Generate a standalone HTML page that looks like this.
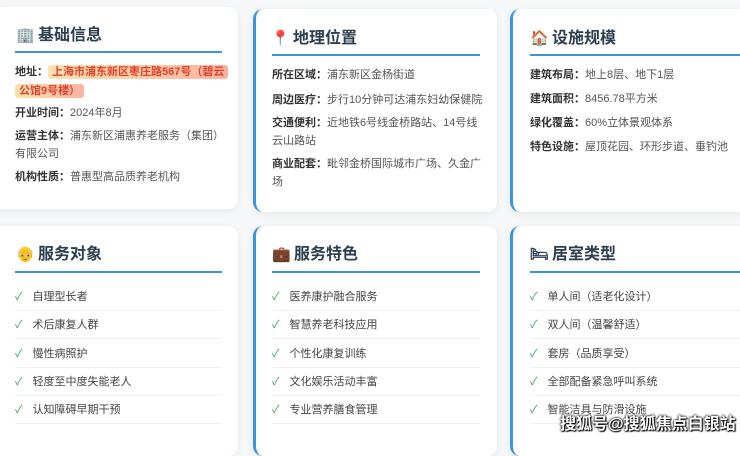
<!DOCTYPE html>
<html><head><meta charset="utf-8"><style>
*{margin:0;padding:0;box-sizing:border-box}
body{width:740px;height:440px;overflow:hidden;background:#f6f7f8;font-family:"Liberation Sans","Noto Sans CJK SC",sans-serif;position:relative}
.card{position:absolute;background:#fff;border-radius:10px;box-shadow:0 2px 8px rgba(0,0,0,.06)}
.bl{border-left:3px solid #3b94dc}
.t{position:absolute;font-size:16px;font-weight:bold;color:#2c3e50;height:22px;line-height:22px;white-space:nowrap}
.t i{font-style:normal;display:inline-block;width:18px;margin-right:4px;font-size:15px}
.ul{position:absolute;height:2px;background:#3b94dc}
.f{position:absolute;font-size:11px;color:#555;line-height:18px}
.f b{color:#333}
.li{position:absolute;font-size:11px;color:#444;height:28px;line-height:28px;border-bottom:1px solid #f0f0f0}
.li span{color:#2eaa5c;margin-right:10px}
.hl{background:linear-gradient(90deg,#fde3b0,#fbb3a3);color:#e0412a;font-weight:bold;padding:1px 4px;border-radius:3px;-webkit-box-decoration-break:clone;box-decoration-break:clone}
</style></head><body>
<div class="card" style="left:-10px;top:7px;width:248px;height:202px"></div>
<div class="t" style="left:16px;top:25px"><i>🏢</i>基础信息</div>
<div class="ul" style="left:15px;top:51px;width:207px"></div>
<div class="f" style="left:15px;top:63px;width:212px;line-height:19px"><b>地址：</b><span class="hl">上海市浦东新区枣庄路567号（碧云公馆9号楼）</span></div>
<div class="f" style="left:15px;top:104px"><b>开业时间：</b>2024年8月</div>
<div class="f" style="left:15px;top:127px;width:210px"><b>运营主体：</b>浦东新区浦惠养老服务（集团）有限公司</div>
<div class="f" style="left:15px;top:168px"><b>机构性质：</b>普惠型高品质养老机构</div>

<div class="card bl" style="left:253px;top:9px;width:244px;height:203px"></div>
<div class="t" style="left:271px;top:28px"><i>📍</i>地理位置</div>
<div class="ul" style="left:272px;top:54px;width:208px"></div>
<div class="f" style="left:272px;top:66px"><b>所在区域：</b>浦东新区金杨街道</div>
<div class="f" style="left:272px;top:91px"><b>周边医疗：</b>步行10分钟可达浦东妇幼保健院</div>
<div class="f" style="left:272px;top:114px;width:210px"><b>交通便利：</b>近地铁6号线金桥路站、14号线云山路站</div>
<div class="f" style="left:272px;top:155px;width:210px"><b>商业配套：</b>毗邻金桥国际城市广场、久金广场</div>

<div class="card bl" style="left:510px;top:9px;width:240px;height:203px"></div>
<div class="t" style="left:530px;top:28px"><i>🏠</i>设施规模</div>
<div class="ul" style="left:530px;top:54px;width:210px"></div>
<div class="f" style="left:530px;top:66px"><b>建筑布局：</b>地上8层、地下1层</div>
<div class="f" style="left:530px;top:90px"><b>建筑面积：</b>8456.78平方米</div>
<div class="f" style="left:530px;top:114px"><b>绿化覆盖：</b>60%立体景观体系</div>
<div class="f" style="left:530px;top:138px"><b>特色设施：</b>屋顶花园、环形步道、垂钓池</div>

<div class="card" style="left:-10px;top:226px;width:248px;height:230px"></div>
<div class="t" style="left:16px;top:244px"><i>👴</i>服务对象</div>
<div class="ul" style="left:15px;top:271px;width:207px"></div>
<div class="li" style="left:15px;top:283px;width:207px"><span>✓</span>自理型长者</div>
<div class="li" style="left:15px;top:311px;width:207px"><span>✓</span>术后康复人群</div>
<div class="li" style="left:15px;top:340px;width:207px"><span>✓</span>慢性病照护</div>
<div class="li" style="left:15px;top:368px;width:207px"><span>✓</span>轻度至中度失能老人</div>
<div class="li" style="left:15px;top:396px;width:207px"><span>✓</span>认知障碍早期干预</div>

<div class="card bl" style="left:253px;top:226px;width:244px;height:230px"></div>
<div class="t" style="left:272px;top:244px"><i>💼</i>服务特色</div>
<div class="ul" style="left:272px;top:271px;width:208px"></div>
<div class="li" style="left:272px;top:283px;width:208px"><span>✓</span>医养康护融合服务</div>
<div class="li" style="left:272px;top:311px;width:208px"><span>✓</span>智慧养老科技应用</div>
<div class="li" style="left:272px;top:340px;width:208px"><span>✓</span>个性化康复训练</div>
<div class="li" style="left:272px;top:368px;width:208px"><span>✓</span>文化娱乐活动丰富</div>
<div class="li" style="left:272px;top:396px;width:208px"><span>✓</span>专业营养膳食管理</div>

<div class="card bl" style="left:510px;top:226px;width:240px;height:230px"></div>
<div class="t" style="left:530px;top:244px"><i>🛏</i>居室类型</div>
<div class="ul" style="left:530px;top:271px;width:210px"></div>
<div class="li" style="left:530px;top:283px;width:210px"><span>✓</span>单人间（适老化设计）</div>
<div class="li" style="left:530px;top:311px;width:210px"><span>✓</span>双人间（温馨舒适）</div>
<div class="li" style="left:530px;top:340px;width:210px"><span>✓</span>套房（品质享受）</div>
<div class="li" style="left:530px;top:368px;width:210px"><span>✓</span>全部配备紧急呼叫系统</div>
<div class="li" style="left:530px;top:396px;width:210px"><span>✓</span>智能洁具与防滑设施</div>
<div style="position:absolute;left:560px;top:410px;font-size:16px;color:#fff;font-weight:bold;text-shadow:0 0 2px #000,0 0 2px #000,1px 1px 1px #000">搜狐号@搜狐焦点白银站</div>
</body></html>
